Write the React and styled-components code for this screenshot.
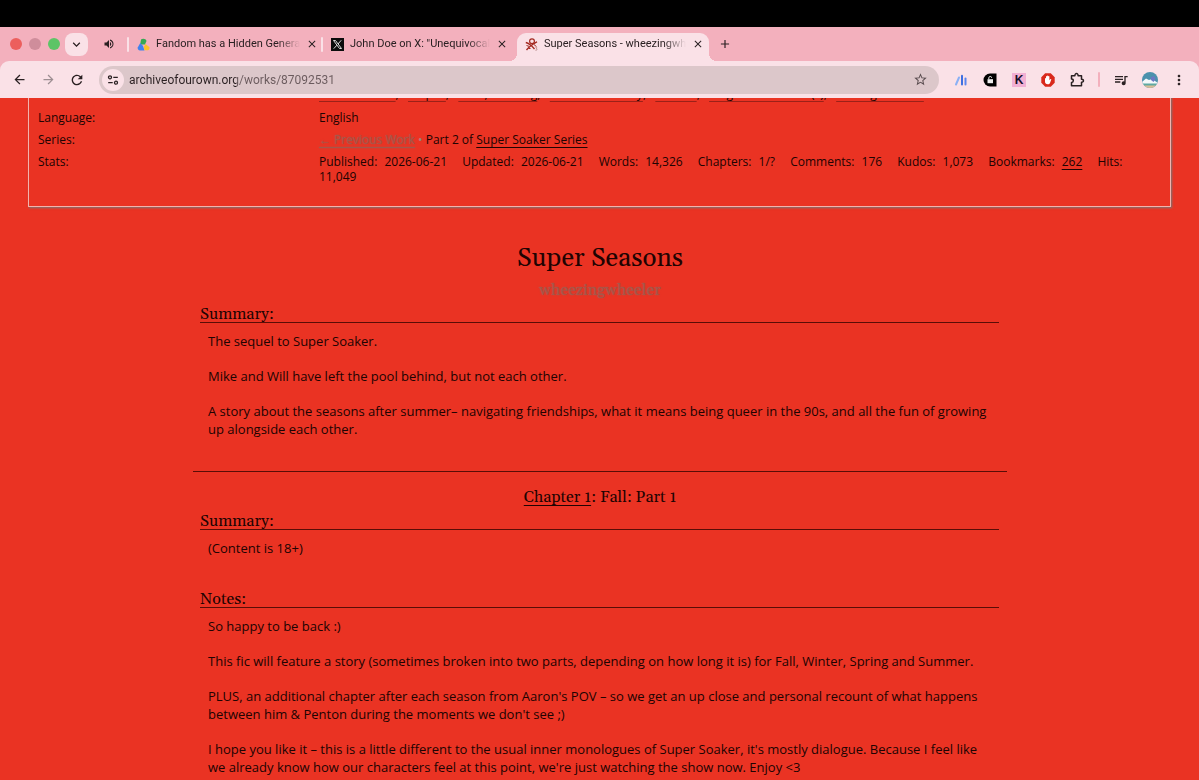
import styled, { createGlobalStyle } from "styled-components";
import {
  MdAdd,
  MdArrowBack,
  MdArrowForward,
  MdClose,
  MdKeyboardArrowDown,
  MdMoreVert,
  MdQueueMusic,
  MdRefresh,
  MdStarBorder,
  MdVolumeUp,
} from "react-icons/md";

const GlobalStyle = createGlobalStyle`
  * {
    box-sizing: border-box;
  }

  body {
    margin: 0;
    background-color: #ea3323;
    color: #200302;
    font-family: "Open Sans", "Noto Sans", sans-serif;
    font-weight: 500;
  }
`;

const Page = styled.div`
  display: flex;
  flex-direction: column;
  height: 100vh;
  overflow: hidden;
`;

const MenuBar = styled.div`
  height: 27px;
  flex: none;
  background-color: #000;
`;

const Browser = styled.header`
  flex: none;
  background-color: #f3b0bd;
  color: #2a2022;
  font-family: Roboto, sans-serif;
`;

const TabStrip = styled.div`
  display: flex;
  align-items: center;
  height: 34px;
  padding-left: 10px;
`;

const Lights = styled.div`
  display: flex;
  gap: 7px;
  margin-right: 5px;
`;

const Light = styled.span`
  width: 12px;
  height: 12px;
  border-radius: 50%;
  background-color: ${(props) => props.$color};
`;

const IconButton = styled.button`
  display: flex;
  align-items: center;
  justify-content: center;
  width: ${(props) => props.$size || 16}px;
  height: ${(props) => props.$size || 16}px;
  flex: none;
  padding: 0;
  border: none;
  background: none;
  color: ${(props) => props.$color || "inherit"};
  cursor: pointer;
`;

const TabSearch = styled(IconButton)`
  border-radius: 8px;
  background-color: #fae1e7;
`;

const RoundButton = styled(IconButton)`
  border-radius: 50%;
  background-color: #fae1e7;
`;

const Muted = styled(IconButton)`
  margin: 0 12px 0 15px;
`;

const Divider = styled.span`
  width: 2px;
  height: 15px;
  flex: none;
  border-radius: 1px;
  background-color: ${(props) => props.$color || "#fae1e7"};
`;

const Tabs = styled.div`
  display: flex;
  align-items: center;
  align-self: flex-end;
  height: 28px;
`;

const TabDivider = styled(Divider)`
  margin-bottom: 6px;
`;

const Tab = styled.div`
  position: relative;
  display: flex;
  align-items: center;
  gap: 6px;
  width: 192px;
  height: 28px;
  padding: 0 8px 6px;
  border-radius: 9px 9px 0 0;
  background-color: ${(props) => (props.$active ? "#fae1e7" : "transparent")};

  &::before,
  &::after {
    content: ${(props) => (props.$active ? '""' : "none")};
    position: absolute;
    bottom: 0;
    width: 8px;
    height: 8px;
  }

  &::before {
    right: 100%;
    background: radial-gradient(circle at 0 0, transparent 8px, #fae1e7 8px);
  }

  &::after {
    left: 100%;
    background: radial-gradient(circle at 100% 0, transparent 8px, #fae1e7 8px);
  }

  svg {
    flex: none;
  }
`;

const TabTitle = styled.span`
  flex: 1;
  white-space: nowrap;
  font-size: 11px;
  font-weight: 400;
  line-height: 16px;
  mask-image: linear-gradient(to right, #000 84%, transparent);
`;

const NewTab = styled(IconButton)`
  margin-left: 8px;
`;

const Toolbar = styled.div`
  display: flex;
  align-items: center;
  height: 37px;
  padding: 0 12px 0 11px;
  border-radius: 9px 9px 0 0;
  background-color: #fae1e7;
`;

const NavButtons = styled.div`
  display: flex;
  gap: 13px;
  margin-right: 14px;
`;

const AddressBar = styled.div`
  display: flex;
  flex: 1;
  align-items: center;
  gap: 5px;
  height: 28px;
  padding: 0 11px 0 3px;
  border-radius: 14px;
  background-color: #dcc7ca;
`;

/* the domain is darker than the path after it */
const Url = styled.input`
  flex: 1;
  min-width: 0;
  padding: 0;
  border: none;
  outline: none;
  background-color: transparent;
  background-image: linear-gradient(to right, #2a2022 107px, #6a5a5d 107px);
  background-clip: text;
  color: transparent;
  font-family: Roboto, sans-serif;
  font-size: 12px;
  line-height: 18px;
`;

const Extensions = styled.div`
  display: flex;
  align-items: center;
  gap: 13px;
  margin-left: 14px;
`;

const Main = styled.main`
  flex: 1;
  overflow: hidden;
`;

/* scrolled, so the tags row is cut off by the toolbar */
const Meta = styled.dl`
  display: grid;
  grid-template-columns: 273px 1fr;
  gap: 7px 8px;
  margin: -12px 28px 0;
  padding: 0 30px 22px 9px;
  border: 1px solid #f3b3ac;
  border-top: none;
  box-shadow: 1px 1px 2px #777;
  font-size: 12px;
  line-height: 15px;

  dt,
  dd {
    margin: 0;
  }
`;

const Link = styled.a`
  color: ${(props) => (props.$faded ? "#a5574a" : "inherit")};
  text-decoration: underline;
  text-decoration-thickness: 1px;
  text-decoration-skip-ink: none;
  text-underline-offset: 3px;
  text-shadow: ${(props) => (props.$faded ? "0 0 2px #a5574a" : "none")};
`;

const Faded = styled.span`
  color: #a4807a;
`;

const Tags = styled.dd`
  padding-bottom: 2px;
  white-space: nowrap;

  a {
    text-decoration-color: #9c2118;
  }
`;

const Stats = styled.dl`
  margin: 0;

  dt,
  dd {
    display: inline;
  }

  dt {
    margin-right: 4px;
  }

  dd {
    margin-right: 12px;
  }
`;

const Work = styled.article`
  margin: 36px 192px 0 193px;
`;

const serif = `
  font-family: Gelasio, Georgia, "Liberation Serif", serif;
  font-variant-numeric: oldstyle-nums;
  font-weight: 400;
`;

const Title = styled.h1`
  ${serif}
  margin: 0;
  font-size: 26px;
  line-height: 32px;
  text-align: center;
`;

const Byline = styled.p`
  ${serif}
  margin: 5px 0;
  font-size: 16px;
  line-height: 20px;
  text-align: center;

  a {
    color: #a5574a;
    text-decoration: none;
    text-shadow: 0 0 2px #a5574a;
  }
`;

const Module = styled.section`
  margin: 0 8px 16px 7px;
`;

const ModuleHeading = styled.h2`
  ${serif}
  margin: 0;
  padding-top: 2px;
  border-bottom: 1px solid #5a0d06;
  font-size: 16px;
  line-height: 15px;
`;

const UserText = styled.blockquote`
  margin: 9px 8px 0;
  font-size: 13px;
  line-height: 18px;

  p {
    margin: 0;
    padding-bottom: 17px;
  }
`;

const Rule = styled.hr`
  margin: 0 0 15px;
  border: none;
  border-top: 1px solid #5a0d06;
`;

const ChapterTitle = styled.h2`
  ${serif}
  margin: 0 0 5px;
  font-size: 16px;
  line-height: 20px;
  text-align: center;
`;

const DriveIcon = () => (
  <svg width="13" height="13" viewBox="0 0 13 13">
    <path d="M4 1.500C5.500 .2 9 .4 9.500 3L8 6.500H3.200Z" fill="#35a853" />
    <path d="M3.300 5 .7 9.500C.3 11 1.500 12.500 3 12.500h4.500L6 8Z" fill="#4182ee" />
    <path d="M8.500 6 12.300 9c.8 1.500-.6 3.300-2.300 3.300H7.500L6.800 9Z" fill="#fbc02d" />
  </svg>
);

const XIcon = () => (
  <svg width="13" height="13" viewBox="0 0 13 13">
    <rect width="13" height="13" fill="#0c0c0c" />
    <path d="M2.500 2.500h2l6 8h-2Z" fill="none" stroke="#eee" strokeWidth=".9" />
    <path d="M10.200 2.300 7 6M5.900 7.200 2.700 10.700" stroke="#eee" strokeWidth=".9" />
  </svg>
);

const ArchiveIcon = () => (
  <svg width="13" height="13" viewBox="0 0 13 13" fill="none" stroke="#a32a22">
    <circle cx="7" cy="3.200" r="2.400" strokeWidth="1.200" />
    <path d="M.8 4.500C3 5 6 6.800 9.500 11M12 3.800C9 5.500 4.500 8 1.500 12" strokeWidth="1.300" />
    <path d="M1.500 7.500 4 8.300M9 6.500l2.500 2.200M3.500 10.500h2" />
    <path d="M10.500 9.500c1.800-.8 2 1 .5 1.300 1.800.2 1.200 1.900-.7 1.400" stroke="#b98a8a" strokeWidth=".8" />
  </svg>
);

const SiteIcon = () => (
  <svg width="14" height="14" viewBox="0 0 14 14" fill="none" stroke="currentColor" strokeWidth="1.300">
    <circle cx="4" cy="4.300" r="1.500" />
    <circle cx="10" cy="9.700" r="1.500" />
    <path d="M7.300 4.300h4.500M2.200 9.700h4.500" />
  </svg>
);

const BarsIcon = () => (
  <svg width="14" height="14" viewBox="0 0 14 14" strokeLinecap="round">
    <path d="M2 11.500 5 4.500" stroke="#8ab0f5" strokeWidth="2" />
    <path d="M8 2.800v8.700" stroke="#3f6fe0" strokeWidth="2" />
    <path d="M11.500 5.500v6" stroke="#5a86ee" strokeWidth="2" />
  </svg>
);

const LockIcon = () => (
  <svg width="14" height="14" viewBox="0 0 14 14">
    <path d="M7 .5h6.500v13H7a6.500 6.500 0 0 1 0-13Z" fill="#000" />
    <rect x="4.500" y="6.200" width="5.500" height="4" fill="#eee" />
    <path d="M5.800 6.200V4.800c0-1.800 2.900-1.800 2.900 0" fill="none" stroke="#eee" />
  </svg>
);

const KBadge = styled.span`
  width: 14px;
  height: 14px;
  background-color: #f2afd3;
  color: #160f2a;
  font-size: 12px;
  font-weight: 800;
  line-height: 14px;
  text-align: center;
`;

const HandIcon = () => (
  <svg width="14" height="14" viewBox="0 0 14 14">
    <path d="M4.200 .3h5.600l3.900 3.900v5.600l-3.900 3.900H4.200L.3 9.800V4.200Z" fill="#d9291c" />
    <path
      d="M4 5.500c0-.8 1-.8 1 0V3.700c0-.8 1.100-.8 1.100 0V3c0-.8 1.200-.8 1.200 0v.7c0-.8 1.100-.8 1.100 0v3.500l.9-1c.6-.5 1.200 0 .9.600L9 10c-.4.900-1 1.300-2.200 1.300C5 11.300 4 10.200 4 8.500Z"
      fill="#fff"
    />
  </svg>
);

const PuzzleIcon = () => (
  <svg width="16" height="16" viewBox="0 0 16 16">
    <path
      d="M2.500 3.700h3.400c-.2-2.800 3.400-2.800 3.200 0h3.400v3.500c2.600-.2 2.600 3.200 0 3v3.500h-10v-3.300c2.400 0 2.400-3.300 0-3.300Z"
      fill="none"
      stroke="currentColor"
      strokeWidth="1.500"
      strokeLinejoin="round"
    />
  </svg>
);

const Avatar = () => (
  <svg width="16" height="16" viewBox="0 0 16 16">
    <defs>
      <clipPath id="avatar">
        <circle cx="8" cy="8" r="8" />
      </clipPath>
    </defs>
    <g clipPath="url(#avatar)">
      <rect width="16" height="16" fill="#4b91ac" />
      <path d="M0 10 4 6.500 7 8l3-1 6 4v2H0Z" fill="#f4f8fa" />
      <path d="M8.500 5.500 12 4l1.500 3-2 3-2.500-2Z" fill="#6b78c2" />
      <path d="M0 11.500h16V14H0Z" fill="#5ea9a3" />
      <path d="M0 13.500h16V16H0Z" fill="#d9bd95" />
    </g>
  </svg>
);

const tags = [
  "Mike Wheeler",
  "Sequel",
  "Love, Bonding",
  "Summer Holiday",
  "Friends",
  "Original Character(s)",
  "Teenage Hearts",
];

const stats = [
  ["Published:", "2026-06-21"],
  ["Updated:", "2026-06-21"],
  ["Words:", "14,326"],
  ["Chapters:", "1/?"],
  ["Comments:", "176"],
  ["Kudos:", "1,073"],
  ["Bookmarks:", <Link key="bookmarks" href="#bookmarks">262</Link>],
  ["Hits:", "11,049"],
];

const BrowserTab = ({ icon, title, active }) => (
  <Tab $active={active}>
    {icon}
    <TabTitle>{title}</TabTitle>
    <IconButton $size={12} aria-label="Close tab">
      <MdClose size={12} />
    </IconButton>
  </Tab>
);

export default function App() {
  return (
    <Page>
      <GlobalStyle />
      <MenuBar />
      <Browser>
        <TabStrip>
          <Lights>
            <Light $color="#ec5f5d" />
            <Light $color="#cf8d9b" />
            <Light $color="#5dc466" />
          </Lights>
          <TabSearch $size={23} aria-label="Search tabs">
            <MdKeyboardArrowDown size={15} />
          </TabSearch>
          <Muted $size={12} aria-label="Mute tab">
            <MdVolumeUp size={12} />
          </Muted>
          <Tabs>
            <TabDivider />
            <BrowserTab icon={<DriveIcon />} title="Fandom has a Hidden Genera" />
            <TabDivider />
            <BrowserTab icon={<XIcon />} title={'John Doe on X: "Unequivocal'} />
            <TabDivider $color="transparent" />
            <BrowserTab icon={<ArchiveIcon />} title="Super Seasons - wheezingwh" active />
          </Tabs>
          <NewTab aria-label="New tab">
            <MdAdd size={14} />
          </NewTab>
        </TabStrip>
        <Toolbar>
          <NavButtons>
            <IconButton aria-label="Back">
              <MdArrowBack size={15} />
            </IconButton>
            <IconButton aria-label="Forward" $color="#9d8e92">
              <MdArrowForward size={15} />
            </IconButton>
            <IconButton aria-label="Reload">
              <MdRefresh size={16} />
            </IconButton>
          </NavButtons>
          <AddressBar>
            <RoundButton $size={22} aria-label="Site information">
              <SiteIcon />
            </RoundButton>
            <Url aria-label="Address" defaultValue="archiveofourown.org/works/87092531" />
            <IconButton aria-label="Bookmark this page" $color="#5a4d50">
              <MdStarBorder size={15} />
            </IconButton>
          </AddressBar>
          <Extensions>
            <IconButton aria-label="Reading stats">
              <BarsIcon />
            </IconButton>
            <IconButton aria-label="Unlocker">
              <LockIcon />
            </IconButton>
            <IconButton aria-label="Kudos helper">
              <KBadge>K</KBadge>
            </IconButton>
            <IconButton aria-label="Ad blocker">
              <HandIcon />
            </IconButton>
            <IconButton aria-label="Extensions">
              <PuzzleIcon />
            </IconButton>
            <Divider $color="#f3b0bd" />
            <IconButton aria-label="Media controls">
              <MdQueueMusic size={16} />
            </IconButton>
            <IconButton aria-label="Profile">
              <Avatar />
            </IconButton>
            <IconButton aria-label="Menu">
              <MdMoreVert size={16} />
            </IconButton>
          </Extensions>
        </Toolbar>
      </Browser>
      <Main>
        <Meta>
          <dt></dt>
          <Tags>
            {tags.map((tag, i) => (
              <span key={tag}>
                <Link href="#tags">{tag}</Link>
                {i < tags.length - 1 && ",\u00a0\u00a0 "}
              </span>
            ))}
          </Tags>
          <dt>Language:</dt>
          <dd>English</dd>
          <dt>Series:</dt>
          <dd>
            <Link href="#previous" $faded>← Previous Work</Link> <Faded>•</Faded> Part 2 of{" "}
            <Link href="#series">Super Soaker Series</Link>
          </dd>
          <dt>Stats:</dt>
          <dd>
            <Stats>
              {stats.map(([label, value]) => (
                <span key={label}>
                  <dt>{label}</dt> <dd>{value}</dd>{" "}
                </span>
              ))}
            </Stats>
          </dd>
        </Meta>
        <Work>
          <Title>Super Seasons</Title>
          <Byline>
            <a href="#author">wheezingwheeler</a>
          </Byline>
          <Module>
            <ModuleHeading>Summary:</ModuleHeading>
            <UserText>
              <p>The sequel to Super Soaker.</p>
              <p>Mike and Will have left the pool behind, but not each other.</p>
              <p>
                A story about the seasons after summer– navigating friendships, what it means being
                queer in the 90s, and all the fun of growing up alongside each other.
              </p>
            </UserText>
          </Module>
          <Rule />
          <ChapterTitle>
            <Link href="#chapter-1">Chapter 1</Link>: Fall: Part 1
          </ChapterTitle>
          <Module>
            <ModuleHeading>Summary:</ModuleHeading>
            <UserText>
              <p>(Content is 18+)</p>
            </UserText>
          </Module>
          <Module>
            <ModuleHeading>Notes:</ModuleHeading>
            <UserText>
              <p>So happy to be back :)</p>
              <p>
                This fic will feature a story (sometimes broken into two parts, depending on how
                long it is) for Fall, Winter, Spring and Summer.
              </p>
              <p>
                PLUS, an additional chapter after each season from Aaron's POV – so we get an up
                close and personal recount of what happens between him &amp; Penton during the
                moments we don't see ;)
              </p>
              <p>
                I hope you like it – this is a little different to the usual inner monologues of
                Super Soaker, it's mostly dialogue. Because I feel like we already know how our
                characters feel at this point, we're just watching the show now. Enjoy &lt;3
              </p>
            </UserText>
          </Module>
        </Work>
      </Main>
    </Page>
  );
}
